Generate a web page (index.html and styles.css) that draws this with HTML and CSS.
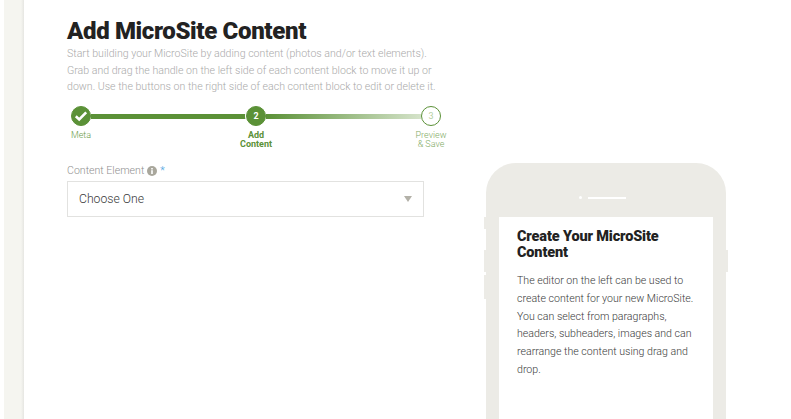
FILE: index.html
```html
<!DOCTYPE html>
<html lang="en">
<head>
  <meta charset="UTF-8">
  <title>Add MicroSite Content</title>
  <link rel="stylesheet" href="styles.css">
</head>
<body>
  <div class="rail"></div>

  <main class="page">
    <section class="editor">
      <h1>Add MicroSite Content</h1>
      <p class="intro">Start building your MicroSite by adding content (photos and/or text elements). Grab and drag the handle on the left side of each content block to move it up or down. Use the buttons on the right side of each content block to edit or delete it.</p>

      <!-- Steps -->
      <div class="steps">
        <div class="step step-done">
          <span class="dot">
            <svg width="14" height="12" viewBox="0 0 14 12"><path d="M1.8 6.2 5.2 9.4 12.2 2.4" fill="none" stroke="#fff" stroke-width="2.6"/></svg>
          </span>
          <span class="step-label">Meta</span>
        </div>
        <div class="bar bar-solid"></div>
        <div class="step step-current">
          <span class="dot">2</span>
          <span class="step-label">Add<br>Content</span>
        </div>
        <div class="bar bar-fade"></div>
        <div class="step step-next">
          <span class="dot">3</span>
          <span class="step-label">Preview<br>&amp; Save</span>
        </div>
      </div>

      <label class="field-label">Content Element
        <svg class="info" width="10" height="10" viewBox="0 0 10 10"><circle cx="5" cy="5" r="5" fill="#a9a79c"/><rect x="4.2" y="4.2" width="1.6" height="3.8" fill="#fff"/><rect x="4.2" y="2" width="1.6" height="1.5" fill="#fff"/></svg>
        <span class="req">*</span>
      </label>
      <div class="select">
        <span>Choose One</span>
        <span class="caret"></span>
      </div>
    </section>

    <!-- Phone preview -->
    <aside class="phone">
      <span class="btn btn-a"></span>
      <span class="btn btn-b"></span>
      <span class="btn btn-c"></span>
      <span class="btn btn-d"></span>
      <div class="speaker"><i class="cam"></i><i class="slot"></i></div>
      <div class="screen">
        <h2>Create Your MicroSite Content</h2>
        <p>The editor on the left can be used to create content for your new MicroSite. You can select from paragraphs, headers, subheaders, images and can rearrange the content using drag and drop.</p>
      </div>
    </aside>
  </main>
</body>
</html>
```

FILE: styles.css
```css
* {
  margin: 0;
  padding: 0;
  box-sizing: border-box;
}

html, body {
  height: 419px;
  overflow: hidden;
}

body {
  display: flex;
  font-family: Roboto, 'Liberation Sans', sans-serif;
  background: #fff;
  padding-left: 4px;
}

.rail {
  width: 20px;
  flex: none;
  background: linear-gradient(90deg, #f5f5f0 85%, #e6e6e2);
}

.page {
  flex: 1;
  display: flex;
  padding: 16px 0 0 43px;
}

/* Left column */
.editor {
  width: 381px;
  flex: none;
}

h1 {
  font-size: 24px;
  line-height: 30px;
  font-weight: 900;
  letter-spacing: -0.35px;
  color: #222;
}

.intro {
  font-size: 10.6px;
  line-height: 16.5px;
  font-weight: 300;
  color: #aaa;
}

/* Steps */
.steps {
  display: flex;
  align-items: flex-start;
  margin: 10px 0 0 4px;
  width: 370px;
  height: 52px;
}

.step {
  width: 20px;
  flex: none;
  display: flex;
  flex-direction: column;
  align-items: center;
  color: #6a9b47;
}

.dot {
  width: 20px;
  height: 20px;
  flex: none;
  border-radius: 50%;
  display: flex;
  justify-content: center;
  align-items: center;
  font-size: 9px;
  font-weight: 700;
  background: #5b9137;
  color: #fff;
  border: 1px solid #5b9137;
}

.step-label {
  margin-top: 5px;
  font-size: 9px;
  line-height: 9.5px;
  text-align: center;
  white-space: nowrap;
  font-weight: 300;
}

.step-current .step-label {
  font-weight: 700;
  color: #5b9137;
}

.step-current .dot {
  box-shadow: 0 0 0 1px #fff;
}

.step-next .dot {
  background: #fff;
  color: #b5cfa2;
  font-weight: 400;
}

.step-next .step-label {
  color: #7fab64;
}

.bar {
  flex: 1;
  height: 5px;
  margin-top: 8px;
}

.bar-solid {
  background: #5b9137;
}

.bar-fade {
  background: linear-gradient(90deg, #5b9137, #d5e3ca);
}

/* Field */
.field-label {
  display: flex;
  align-items: center;
  gap: 3px;
  margin-top: 6px;
  font-size: 10.6px;
  line-height: 14px;
  font-weight: 300;
  color: #8f8f8f;
}

.info {
  display: block;
}

.req {
  color: #4aa3df;
}

.select {
  margin-top: 3px;
  width: 357px;
  height: 36px;
  border: 1px solid #e2e2e0;
  padding: 0 11px;
  display: flex;
  justify-content: space-between;
  align-items: center;
  font-size: 12.2px;
  font-weight: 300;
  color: #3a3a3a;
}

.caret {
  width: 0;
  height: 0;
  border-left: 4px solid transparent;
  border-right: 4px solid transparent;
  border-top: 6.5px solid #b3b1a8;
}

/* Phone */
.phone {
  position: relative;
  width: 240px;
  height: 256px;
  flex: none;
  margin: 147px 0 0 38px;
  background: #ecebe6;
  border-radius: 30px 30px 0 0;
  padding: 54px 13px 0;
}

.btn {
  position: absolute;
  width: 2px;
  background: #ecebe6;
}

.btn-a { left: -2px; top: 54px; height: 12px; }
.btn-b { left: -2px; top: 87px; height: 22px; }
.btn-c { left: -2px; top: 112px; height: 24px; }
.btn-d { right: -2px; top: 87px; height: 22px; }

.speaker {
  position: absolute;
  top: 33px;
  left: 93px;
  display: flex;
  align-items: center;
  gap: 6px;
}

.cam {
  width: 3px;
  height: 3px;
  border-radius: 50%;
  background: #fff;
}

.slot {
  width: 38px;
  height: 2px;
  background: #fff;
}

.screen {
  background: #fff;
  height: 100%;
  padding: 12px 18px;
}

h2 {
  font-size: 14.5px;
  line-height: 16px;
  font-weight: 900;
  letter-spacing: -0.15px;
  color: #222;
}

.screen p {
  margin-top: 11px;
  font-size: 10.6px;
  line-height: 17.8px;
  font-weight: 300;
  color: #3a3a3a;
}
```
